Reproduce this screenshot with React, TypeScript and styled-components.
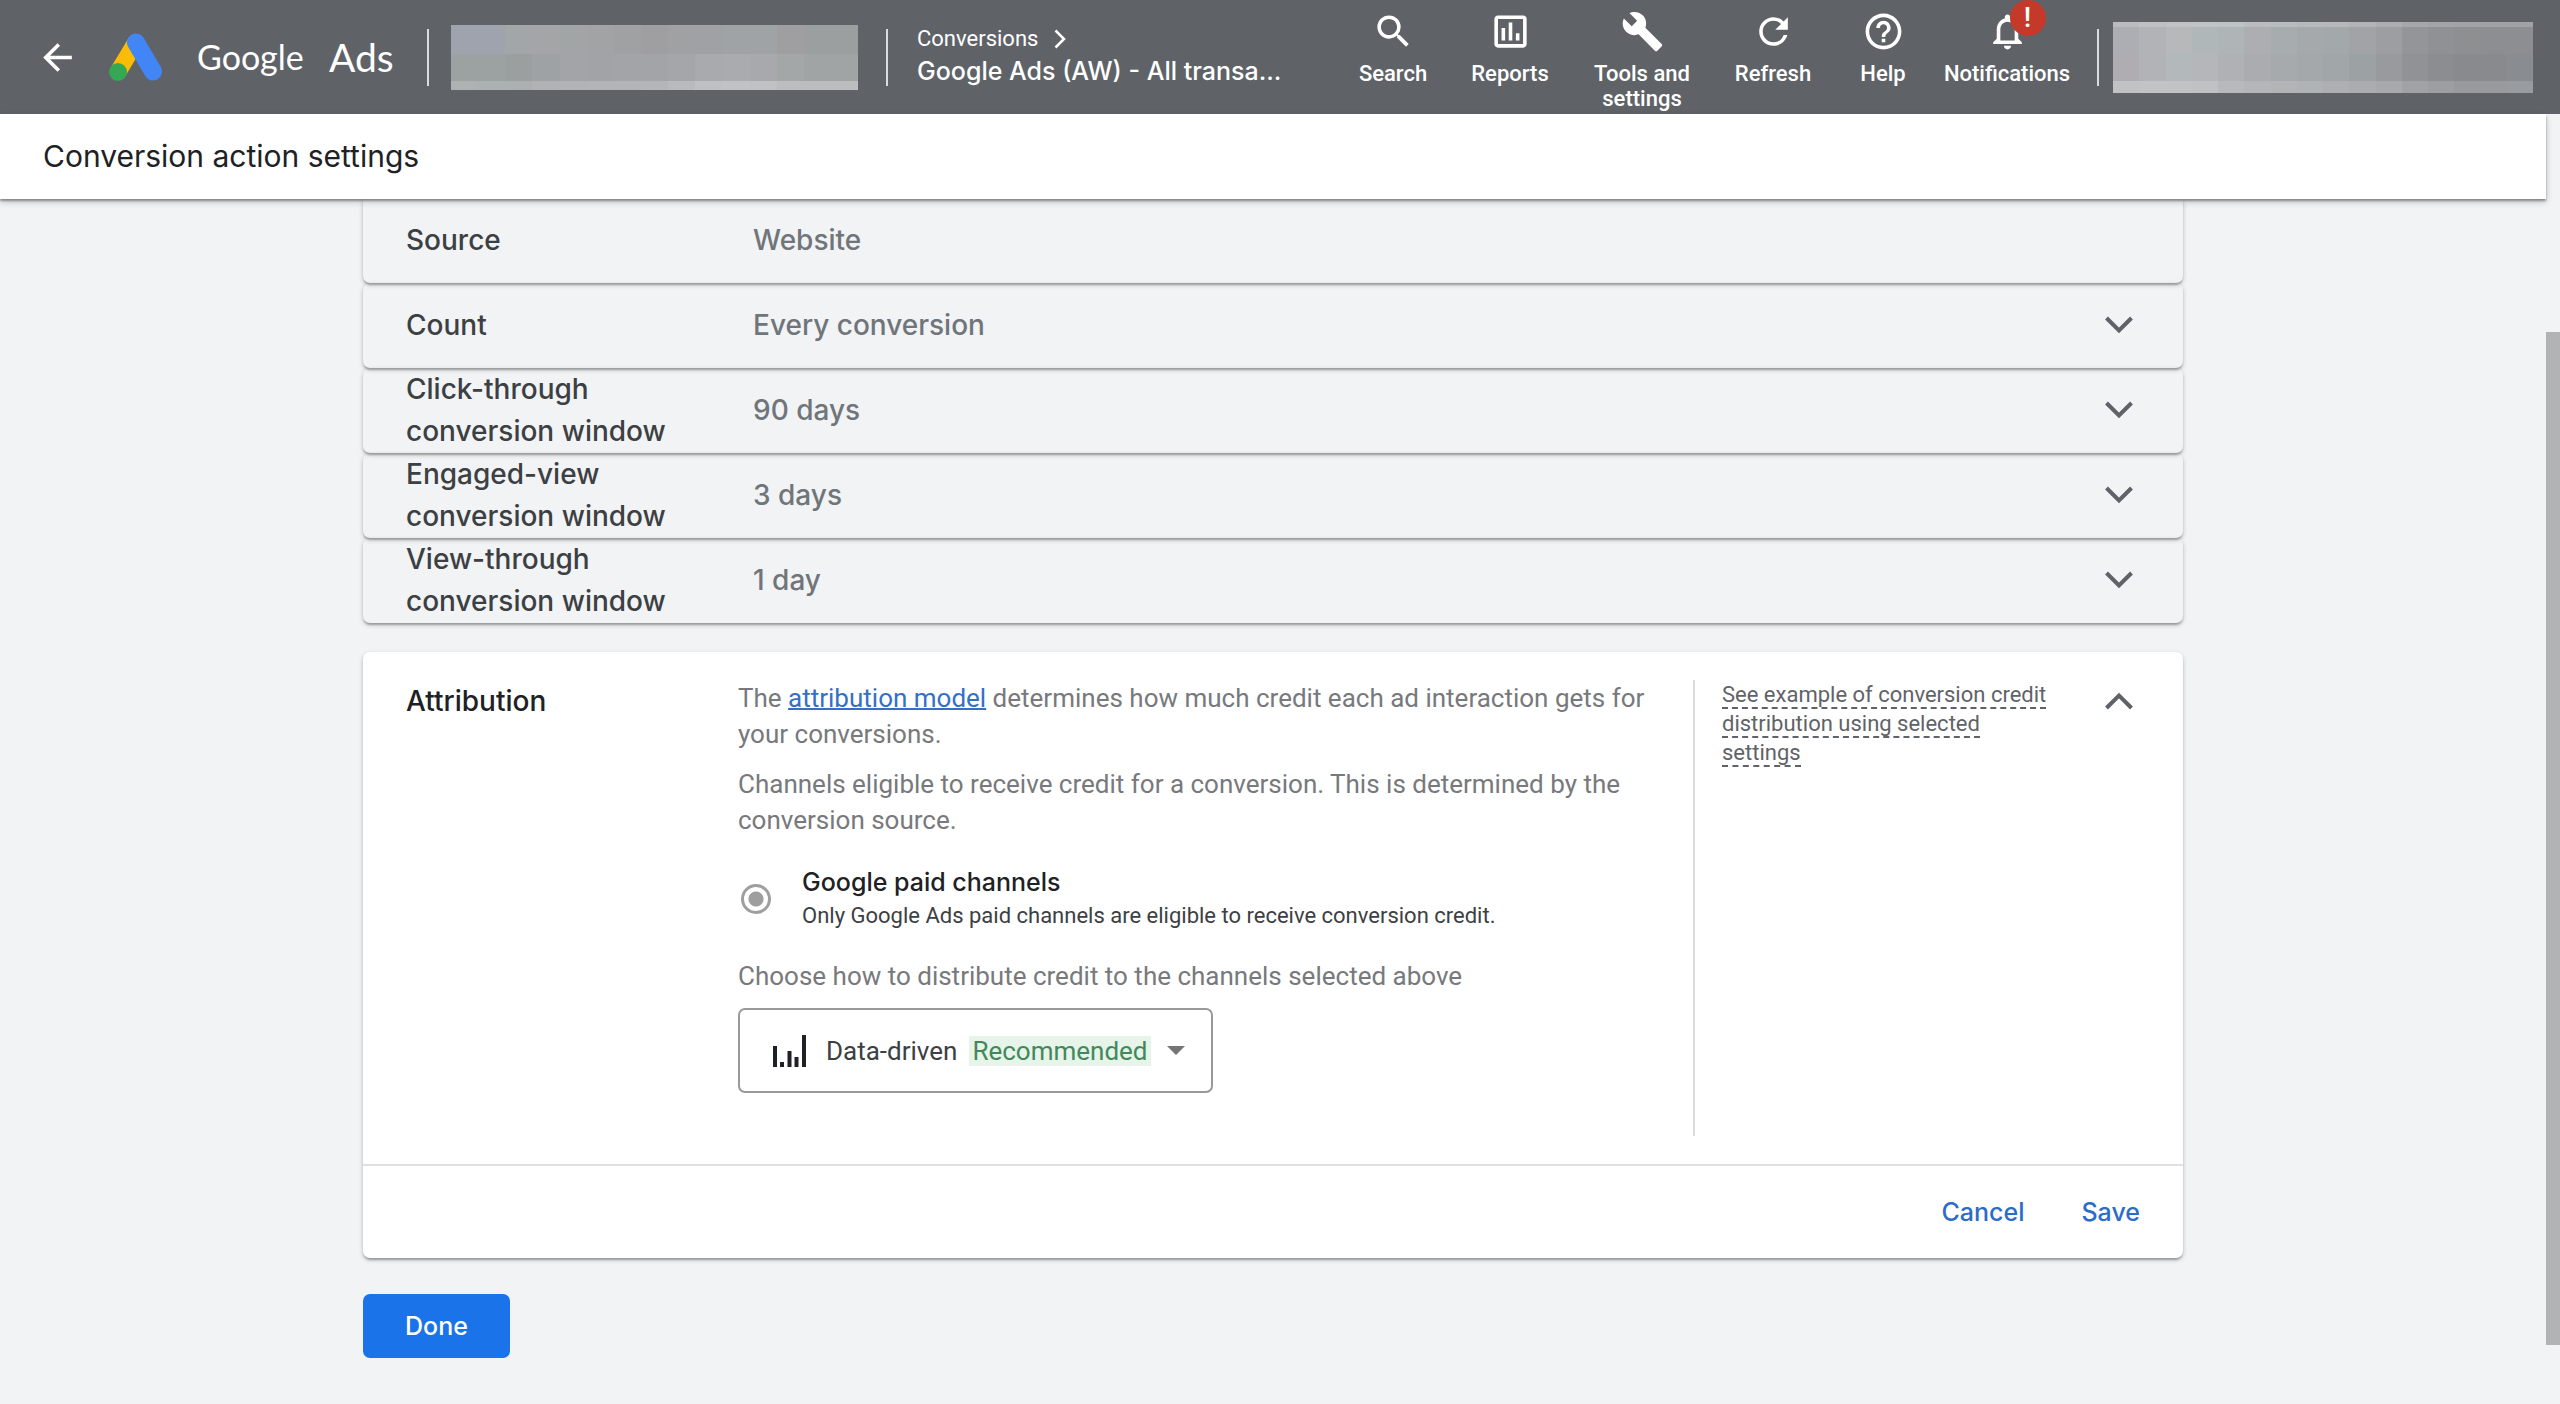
import React, { useState } from "react";
import styled, { createGlobalStyle } from "styled-components";
import {
  MdArrowBack,
  MdBuild,
  MdHelpOutline,
  MdNotificationsNone,
  MdOutlineAssessment,
  MdRefresh,
  MdSearch,
} from "react-icons/md";

const display = `Inter, "Open Sans", sans-serif`;
const body = `Roboto, "Noto Sans", sans-serif`;
const cardShadow =
  "0 2px 2px rgba(0, 0, 0, 0.14), 0 4px 2px -2px rgba(0, 0, 0, 0.12), 0 2px 5px rgba(0, 0, 0, 0.2)";

const GlobalStyle = createGlobalStyle`
  *, *::before, *::after { box-sizing: border-box; }
  body { margin: 0; background: #f1f3f5; font-family: ${body}; color: #3c4043; }
  p, h1, h2 { margin: 0; }
  button { border: 0; padding: 0; background: none; color: inherit; font: inherit; cursor: pointer; }
  svg { display: block; flex: none; }
`;

const Page = styled.div`
  display: flex;
  flex-direction: column;
  min-height: 100vh;
`;

/* ---------- top bar ---------- */

const TopBar = styled.header`
  display: flex;
  align-items: center;
  height: 114px;
  padding: 0 27px 0 36px;
  background: #5f6368;
  color: #fff;
`;

const Brand = styled.a`
  display: flex;
  align-items: center;
  margin-left: 30px;
  color: #fff;
  font-family: Lato, sans-serif;
  line-height: 44px;
  text-decoration: none;
`;

const Wordmark = styled.span`
  width: 132px;
  margin-left: 35px;
  font-size: 34px;
`;

const Product = styled.span`
  width: 98px;
  font-size: 39px;
`;

const Divider = styled.span`
  flex: none;
  width: 2px;
  height: 57px;
  background: #dadce0;
`;

const Mosaic = styled.div<{ $width: number; $height: number }>`
  display: flex;
  flex-direction: column;
  flex: none;
  width: ${(p) => p.$width}px;
  height: ${(p) => p.$height}px;
`;

const MosaicRow = styled.div<{ $size: number }>`
  display: flex;
  flex: ${(p) => p.$size} 0 0;
`;

const MosaicCell = styled.i<{ $color: string }>`
  flex: 1;
  background: ${(p) => p.$color};
`;

const Account = styled.div`
  margin: 0 28px 0 22px;
`;

const Crumbs = styled.nav`
  display: flex;
  flex-direction: column;
  margin-left: 29px;
  padding-bottom: 4px;
`;

const CrumbLink = styled.a`
  display: flex;
  align-items: center;
  gap: 16px;
  height: 32px;
  color: #fff;
  font-size: 22px;
  text-decoration: none;
`;

const CrumbCurrent = styled.span`
  font: 500 25px/33px ${display};
`;

const Tools = styled.nav`
  display: flex;
  align-self: stretch;
  margin: 0 16px 0 auto;
`;

const ToolButton = styled.button<{ $width: number }>`
  display: flex;
  flex-direction: column;
  align-items: center;
  gap: 8px;
  width: ${(p) => p.$width}px;
  padding: 10px 8px 0;
  font-size: 22px;
  font-weight: 500;
  line-height: 25px;
`;

const ToolIcon = styled.span`
  position: relative;
`;

const Alert = styled.span`
  position: absolute;
  top: -10px;
  left: 24px;
  width: 36px;
  height: 36px;
  border-radius: 50%;
  background: #c5392b;
  font-size: 28px;
  line-height: 36px;
  text-align: center;
`;

const Profile = styled.div`
  margin-left: 14px;
`;

/* ---------- page ---------- */

const Main = styled.div`
  display: flex;
  flex: 1;
`;

const Content = styled.main`
  flex: 1;
  min-width: 0;
`;

const TitleBar = styled.div`
  position: relative;
  z-index: 1;
  display: flex;
  align-items: center;
  height: 85px;
  padding: 0 43px 2px;
  background: #fff;
  box-shadow: 0 2px 2px rgba(0, 0, 0, 0.35), 0 3px 7px rgba(0, 0, 0, 0.2);
`;

const Title = styled.h1`
  color: #202124;
  font: 400 30px/40px ${display};
`;

const ScrollTrack = styled.div`
  display: flex;
  flex-direction: column;
  width: 14px;
  background: #f1f3f5;
`;

const ScrollSpace = styled.span<{ $share: number }>`
  flex: ${(p) => p.$share} 0 0;
`;

const ScrollThumb = styled.span`
  flex: 1013 0 0;
  background: #b1b3b5;
`;

const Column = styled.div`
  display: flex;
  flex-direction: column;
  width: 100%;
  max-width: 1820px;
  margin: 0 auto;
  padding-bottom: 28px;
`;

const Row = styled.section<{ $first?: boolean }>`
  display: grid;
  grid-template-columns: 347px 1fr auto;
  align-items: center;
  height: ${(p) => (p.$first ? 84 : 85)}px;
  padding: 0 36px 2px 43px;
  border-radius: ${(p) => (p.$first ? "0 0 7px 7px" : "7px")};
  box-shadow: ${cardShadow};
`;

const RowLabel = styled.h2`
  max-width: 290px;
  color: #3c4043;
  font: 500 28px/42px ${display};
`;

const RowValue = styled.span`
  color: #70757a;
  font: 500 28px/42px ${display};
`;

const Toggle = styled.button`
  display: flex;
  align-items: center;
  justify-content: center;
  width: 56px;
  height: 42px;
  color: #5f6368;
`;

const Card = styled.section`
  margin-top: 29px;
  border-radius: 7px;
  background: #fff;
  box-shadow: ${cardShadow};
`;

const CardBody = styled.div`
  display: grid;
  grid-template-columns: 332px 1fr 454px;
  padding: 28px 36px 28px 43px;
`;

const CardLabel = styled(RowLabel)`
  color: #202124;
`;

const Settings = styled.div`
  display: flex;
  flex-direction: column;
  align-items: flex-start;
  gap: 14px;
  padding: 0 20px 43px 0;
`;

const Text = styled.p`
  color: #77797c;
  font-size: 26px;
  line-height: 36px;
`;

const Link = styled.a`
  color: #3470c4;
  text-decoration: underline;
  text-decoration-thickness: 2px;
`;

const Option = styled.label`
  display: flex;
  align-items: center;
  gap: 31px;
  margin: 14px 0 12px;
  padding-left: 3px;
`;

const Radio = styled.input`
  flex: none;
  width: 30px;
  height: 30px;
  margin: 0;
  appearance: none;
  border: 3px solid #9e9e9e;
  border-radius: 50%;
  background: radial-gradient(circle, #9e9e9e 7px, transparent 8px);
`;

const OptionText = styled.span`
  display: flex;
  flex-direction: column;
  font-size: 22px;
  line-height: 33px;
`;

const OptionTitle = styled.span`
  color: #202124;
  font: 500 25px/33px ${display};
`;

const SelectBox = styled.div`
  position: relative;
  display: flex;
  align-items: center;
  height: 85px;
  padding: 0 26px 0 33px;
  border: 2px solid #97999b;
  border-radius: 7px;
  font-size: 26px;
  line-height: 30px;
`;

const SelectText = styled.span`
  margin: 0 12px 0 20px;
`;

const Badge = styled.span`
  padding: 0 3px;
  background: #e6f4ea;
  color: #43885a;
`;

const Caret = styled.svg`
  margin-left: 16px;
`;

const NativeSelect = styled.select`
  position: absolute;
  inset: 0;
  width: 100%;
  height: 100%;
  opacity: 0;
  cursor: pointer;
`;

const Side = styled.aside`
  display: flex;
  align-items: flex-start;
  justify-content: space-between;
  padding-left: 27px;
  border-left: 2px solid #dadce0;
`;

const Hint = styled.p`
  width: 332px;
  color: #5f6368;
  font-size: 22px;
  line-height: 29px;
`;

const HintLink = styled.span`
  border-bottom: 2px dashed #5f6368;
`;

const CardFooter = styled.div`
  display: flex;
  align-items: center;
  justify-content: flex-end;
  gap: 57px;
  height: 94px;
  padding: 0 43px;
  border-top: 2px solid #e0e0e0;
`;

const TextButton = styled.button`
  color: #2b6cc9;
  font: 500 25px/33px ${display};
`;

const DoneButton = styled.button`
  align-self: flex-start;
  height: 64px;
  margin-top: 36px;
  padding: 0 42px;
  border-radius: 7px;
  background: #1a73e8;
  color: #fff;
  font: 500 25px/33px ${display};
`;

/* ---------- data ---------- */

type MosaicData = [number, string][];

const accountMosaic: MosaicData = [
  [29, "#9fa3ad #9fa3ad #a3a6a8 #a4a5a7 #a2a5a6 #a2a3a5 #a0a1a3 #9f9fa1 #a0a1a3 #a0a1a4 #a0a3a4 #9fa3a5 #9f9fa2 #9b9fa0 #9b9fa0"],
  [27, "#9ca1a2 #9ca1a2 #9b9f9f #9fa2a4 #a3a4a7 #a2a3a6 #a3a4a7 #a3a4a7 #a5a6a9 #a9aaad #a9abae #a8a9ac #a3a7a8 #a0a4a5 #a0a4a5"],
  [9, "#aeb2b2 #abb2b1 #adb0b0 #b1b2b4 #b1b3b4 #b3b4b6 #b3b4b6 #b4b5b7 #b9babb #bfc0c2 #c1c2c4 #c0c1c3 #bbbdbf #bbbdbf #bbbdbf"],
];

const profileMosaic: MosaicData = [
  [5, "#babbbe #bfc0c1 #c1c2c4 #c1c3c5 #bec3c4 #bbbcbf #b9bcbe #b7babb #b6b8ba #b1b3b5 #acadb0 #a6a7a9 #a3a4a6 #a2a3a6 #a1a2a5 #a1a2a5"],
  [27, "#adaeb3 #b2b3b6 #b6b8b9 #b0b7b9 #afb4b6 #adaeb1 #a7acae #a5a9ab #a3a8a9 #a2a3a6 #9d9ea1 #949597 #909194 #8e8f91 #8d8e91 #8d8e91"],
  [27, "#afadb1 #b2b3b6 #b3b8bb #b4b6b9 #b0b1b5 #abacaf #a6aaac #a4a8aa #a1a6a8 #9ca1a3 #999a9d #919295 #8c8d91 #898a8e #898a8e #898d92"],
  [12, "#c1c2c4 #c2c3c4 #c1c3c5 #c0c1c3 #b8b9bc #b5b6b9 #b2b4b6 #b0b3b5 #aeafb2 #abacaf #a8a9ac #a1a2a5 #9d9ea1 #999a9d #999a9d #989b9f"],
];

const rows = [
  { label: "Source", value: "Website", editable: false },
  { label: "Count", value: "Every conversion", editable: true },
  { label: "Click-through conversion window", value: "90 days", editable: true },
  { label: "Engaged-view conversion window", value: "3 days", editable: true },
  { label: "View-through conversion window", value: "1 day", editable: true },
];

const tools = [
  { label: "Search", Icon: MdSearch, width: 112 },
  { label: "Reports", Icon: MdOutlineAssessment, width: 122 },
  { label: "Tools and settings", Icon: MdBuild, width: 142 },
  { label: "Refresh", Icon: MdRefresh, width: 120 },
  { label: "Help", Icon: MdHelpOutline, width: 100 },
  { label: "Notifications", Icon: MdNotificationsNone, width: 148, alert: true },
];

/* ---------- parts ---------- */

function Redacted({ data, width, height }: { data: MosaicData; width: number; height: number }) {
  return (
    <Mosaic $width={width} $height={height} aria-hidden="true">
      {data.map(([size, colors], r) => (
        <MosaicRow key={r} $size={size}>
          {colors.split(" ").map((c, i) => (
            <MosaicCell key={i} $color={c} />
          ))}
        </MosaicRow>
      ))}
    </Mosaic>
  );
}

function AdsLogo() {
  return (
    <svg width="53" height="48" viewBox="0 0 53 48" aria-hidden="true">
      <path d="M27 9 9 39" stroke="#fbbc04" strokeWidth="17" />
      <path d="M27 9.500 44 38.500" stroke="#4285f4" strokeWidth="18" strokeLinecap="round" />
      <circle cx="9" cy="39" r="9" fill="#34a853" />
    </svg>
  );
}

function Chevron({ up }: { up?: boolean }) {
  return (
    <svg width="28" height="18" viewBox="0 0 28 18" fill="none" stroke="currentColor" strokeWidth="4" aria-hidden="true">
      <path d={up ? "M1.500 16 14 3.500 26.500 16" : "M1.500 2 14 14.500 26.500 2"} />
    </svg>
  );
}

function CrumbArrow() {
  return (
    <svg width="12" height="20" viewBox="0 0 12 20" fill="none" stroke="currentColor" strokeWidth="2.500" aria-hidden="true">
      <path d="M1.500 1.500 10 10 1.500 18.500" />
    </svg>
  );
}

function ModelIcon() {
  return (
    <svg width="33" height="32" viewBox="0 0 33 32" fill="#202124" aria-hidden="true">
      <rect x="0" y="11" width="4" height="21" />
      <rect x="7" y="27" width="4" height="5" />
      <rect x="14.500" y="16" width="4" height="16" />
      <rect x="21.500" y="22" width="4" height="10" />
      <rect x="29" y="0" width="4" height="32" />
    </svg>
  );
}

export default function App() {
  const [model, setModel] = useState("data-driven");
  return (
    <>
      <GlobalStyle />
      <Page>
        <TopBar>
          <button aria-label="Back">
            <MdArrowBack size={43} />
          </button>
          <Brand href="#home">
            <AdsLogo />
            <Wordmark>Google</Wordmark>
            <Product>Ads</Product>
          </Brand>
          <Divider />
          <Account>
            <Redacted data={accountMosaic} width={407} height={65} />
          </Account>
          <Divider />
          <Crumbs aria-label="Breadcrumb">
            <CrumbLink href="#conversions">
              Conversions
              <CrumbArrow />
            </CrumbLink>
            <CrumbCurrent>Google Ads (AW) - All transa...</CrumbCurrent>
          </Crumbs>
          <Tools aria-label="Tools">
            {tools.map(({ label, Icon, width, alert }) => (
              <ToolButton key={label} $width={width}>
                <ToolIcon>
                  <Icon size={43} />
                  {alert && <Alert>!</Alert>}
                </ToolIcon>
                {label}
              </ToolButton>
            ))}
          </Tools>
          <Divider />
          <Profile>
            <Redacted data={profileMosaic} width={420} height={71} />
          </Profile>
        </TopBar>

        <Main>
          <Content>
            <TitleBar>
              <Title>Conversion action settings</Title>
            </TitleBar>
            <Column>
              {rows.map((row, i) => (
                <Row key={row.label} $first={i === 0}>
                  <RowLabel>{row.label}</RowLabel>
                  <RowValue>{row.value}</RowValue>
                  {row.editable && (
                    <Toggle aria-label={`Expand ${row.label}`}>
                      <Chevron />
                    </Toggle>
                  )}
                </Row>
              ))}

              <Card>
                <CardBody>
                  <CardLabel>Attribution</CardLabel>
                  <Settings>
                    <Text>
                      The <Link href="#attribution-model">attribution model</Link> determines how much
                      credit each ad interaction gets for your conversions.
                    </Text>
                    <Text>
                      Channels eligible to receive credit for a conversion. This is determined by the
                      conversion source.
                    </Text>
                    <Option>
                      <Radio type="radio" name="channels" defaultChecked />
                      <OptionText>
                        <OptionTitle>Google paid channels</OptionTitle>
                        Only Google Ads paid channels are eligible to receive conversion credit.
                      </OptionText>
                    </Option>
                    <Text as="label" htmlFor="model">
                      Choose how to distribute credit to the channels selected above
                    </Text>
                    <SelectBox>
                      <ModelIcon />
                      <SelectText>Data-driven</SelectText>
                      <Badge>Recommended</Badge>
                      <Caret width="18" height="9" viewBox="0 0 18 9" aria-hidden="true">
                        <path d="M0 0h18L9 9z" fill="#757575" />
                      </Caret>
                      <NativeSelect id="model" value={model} onChange={(e) => setModel(e.target.value)}>
                        <option value="data-driven">Data-driven</option>
                      </NativeSelect>
                    </SelectBox>
                  </Settings>
                  <Side>
                    <Hint>
                      <HintLink>See example of conversion credit distribution using selected settings</HintLink>
                    </Hint>
                    <Toggle aria-label="Collapse Attribution">
                      <Chevron up />
                    </Toggle>
                  </Side>
                </CardBody>
                <CardFooter>
                  <TextButton>Cancel</TextButton>
                  <TextButton>Save</TextButton>
                </CardFooter>
              </Card>

              <DoneButton>Done</DoneButton>
            </Column>
          </Content>
          <ScrollTrack aria-hidden="true">
            <ScrollSpace $share={218} />
            <ScrollThumb />
            <ScrollSpace $share={59} />
          </ScrollTrack>
        </Main>
      </Page>
    </>
  );
}
